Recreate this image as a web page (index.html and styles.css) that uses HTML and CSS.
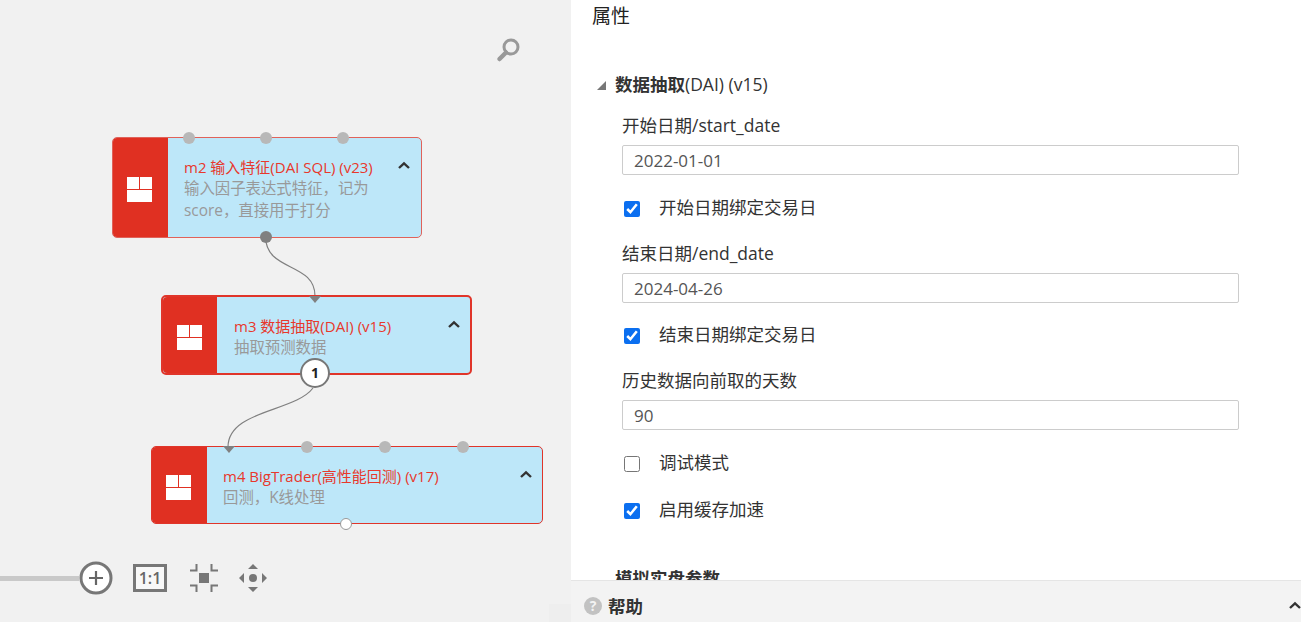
FILE: index.html
```html
<!DOCTYPE html>
<html lang="zh">
<head>
<meta charset="utf-8">
<title>属性</title>
<link rel="stylesheet" href="styles.css">
</head>
<body>
<div class="app">
  <div class="canvas">
    <svg class="search" width="26" height="26" viewBox="0 0 26 26"><circle cx="15" cy="10" r="7" fill="none" stroke="#999" stroke-width="3"/><path d="M10 15.500 3.500 22" stroke="#999" stroke-width="4.500" stroke-linecap="round"/></svg>

    <svg class="wires" width="571" height="622" viewBox="0 0 571 622">
      <path d="M265.500 237C266 272 315 262 315 296" fill="none" stroke="#808080" stroke-width="1.200"/>
      <path d="M313 388C295 412 228 410 228 447" fill="none" stroke="#808080" stroke-width="1.200"/>
    </svg>

    <div class="node node-m2">
      <div class="node-icon"><span class="grid-icon"><i></i><i></i><i class="wide"></i></span></div>
      <div class="node-body">
        <div class="node-title">m2 输入特征(DAI SQL) (v23)</div>
        <div class="node-desc">输入因子表达式特征，记为<br>score，直接用于打分</div>
      </div>
      <svg class="chev" width="12" height="8" viewBox="0 0 12 8"><path d="M1 7 6 2.300 11 7" fill="none" stroke="#333" stroke-width="2.400"/></svg>
      <b class="port top p1"></b><b class="port top p2"></b><b class="port top p3"></b>
      <b class="port bottom out"></b>
    </div>

    <div class="node node-m3">
      <div class="node-icon"><span class="grid-icon"><i></i><i></i><i class="wide"></i></span></div>
      <div class="node-body">
        <div class="node-title">m3 数据抽取(DAI) (v15)</div>
        <div class="node-desc">抽取预测数据</div>
      </div>
      <svg class="chev" width="12" height="8" viewBox="0 0 12 8"><path d="M1 7 6 2.300 11 7" fill="none" stroke="#333" stroke-width="2.400"/></svg>
      <span class="arrow-in"></span>
      <span class="badge">1</span>
    </div>

    <div class="node node-m4">
      <div class="node-icon"><span class="grid-icon"><i></i><i></i><i class="wide"></i></span></div>
      <div class="node-body">
        <div class="node-title">m4 BigTrader(高性能回测) (v17)</div>
        <div class="node-desc">回测，K线处理</div>
      </div>
      <svg class="chev" width="12" height="8" viewBox="0 0 12 8"><path d="M1 7 6 2.300 11 7" fill="none" stroke="#333" stroke-width="2.400"/></svg>
      <span class="arrow-in"></span>
      <b class="port top p1"></b><b class="port top p2"></b><b class="port top p3"></b>
      <b class="port bottom empty"></b>
    </div>

    <div class="toolbar">
      <span class="slider"></span>
      <svg width="34" height="34" viewBox="0 0 34 34"><circle cx="17" cy="17" r="15" fill="#fff" stroke="#777" stroke-width="3"/><path d="M10 17H24M17 10V24" stroke="#666" stroke-width="2.200"/></svg>
      <span class="one-one">1:1</span>
      <svg class="tool-fit" width="28" height="28" viewBox="0 0 28 28"><rect x="9" y="9" width="10" height="10" fill="#777"/><path d="M0 6.500H6.500V0M21.500 0V6.500H28M0 21.500H6.500V28M21.500 28V21.500H28" fill="none" stroke="#777" stroke-width="2"/></svg>
      <svg class="tool-move" width="28" height="28" viewBox="0 0 28 28"><circle cx="14" cy="14" r="4" fill="#777"/><path d="M14 0 19 5H9ZM14 28 9 23H19ZM0 14 5 9V19ZM28 14 23 19V9Z" fill="#777"/></svg>
    </div>
    <span class="corner"></span>
  </div>

  <div class="panel">
    <h1 class="panel-title">属性</h1>
    <div class="scroll">
      <h2 class="section"><span class="tri"></span>数据抽取<span class="section-latin">(DAI) (v15)</span></h2>
      <div class="form">
        <label class="lbl">开始日期/start_date</label>
        <input class="txt" type="text" value="2022-01-01">
        <label class="chk"><input type="checkbox" checked>开始日期绑定交易日</label>
        <label class="lbl">结束日期/end_date</label>
        <input class="txt" type="text" value="2024-04-26">
        <label class="chk chk-tight"><input type="checkbox" checked>结束日期绑定交易日</label>
        <label class="lbl">历史数据向前取的天数</label>
        <input class="txt" type="text" value="90">
        <label class="chk chk-plain"><input type="checkbox">调试模式</label>
        <label class="chk chk-plain"><input type="checkbox" checked>启用缓存加速</label>
      </div>
      <h2 class="section section-next">模拟实盘参数</h2>
    </div>
    <div class="help">
      <span class="help-q">?</span>
      <span class="help-text">帮助</span>
      <svg class="help-chev" width="12" height="8" viewBox="0 0 12 8"><path d="M1 7 6 2.300 11 7" fill="none" stroke="#333" stroke-width="2.400"/></svg>
    </div>
  </div>
</div>
</body>
</html>
```
FILE: styles.css
```css
* { box-sizing: border-box; }
html, body { margin: 0; height: 100%; overflow: hidden; }
body {
  font-family: "Open Sans", "Noto Sans CJK SC", "Noto Sans", sans-serif;
  color: #333;
  background: #fff;
}
.app { display: flex; width: 1301px; height: 622px; }

/* free canvas */
.canvas { position: relative; width: 571px; flex: none; height: 100%; background: #f1f1f1; overflow: hidden; }
.search { position: absolute; left: 496px; top: 37px; }
.wires { position: absolute; left: 0; top: 0; }
.corner { position: absolute; left: 549px; top: 604px; width: 22px; height: 18px; background: #eeeeee; }

.node {
  position: absolute;
  display: flex;
  background: #bde7f9;
  border: 1px solid #e0625a;
  border-radius: 5px;
}
.node-m2 { left: 112px; top: 137px; width: 310px; height: 101px; }
.node-m3 { left: 161px; top: 295px; width: 311px; height: 80px; border: 2px solid #e0352a; }
.node-m4 { left: 151px; top: 446px; width: 392px; height: 78px; border-color: #e0352a; }

.node-icon {
  flex: none;
  width: 55px;
  padding: 4px 2px 0 0;
  background: #e03022;
  border-radius: 4px 0 0 4px;
  display: flex;
  align-items: center;
  justify-content: center;
}
.node-m3 .node-icon { width: 54px; }
.node-m4 .node-icon { padding-top: 5px; }
.grid-icon { display: grid; grid-template-columns: 12px 12px; grid-template-rows: 12px 12px; gap: 1px; }
.grid-icon i { background: #fff; }
.grid-icon .wide { grid-column: 1 / 3; }

.node-body { padding: 18px 0 0 16px; min-width: 0; }
.node-m3 .node-body { padding-left: 17px; }
.node-title { font-size: 15px; line-height: 22px; color: #e8382c; white-space: nowrap; }
.node-desc { font-size: 15.400px; line-height: 22px; color: #999; white-space: nowrap; }

.chev { position: absolute; right: 11px; top: 23px; }
.node-m3 .chev { right: 10px; top: 23px; }
.node-m4 .chev { right: 10px; top: 23px; }

.port { position: absolute; width: 12px; height: 12px; border-radius: 50%; background: #b8b8b8; }
.port.top { top: -6px; }
.node-m2 .p1 { left: 70px; }
.node-m2 .p2 { left: 147px; }
.node-m2 .p3 { left: 224px; }
.node-m4 .p1 { left: 149px; }
.node-m4 .p2 { left: 227px; }
.node-m4 .p3 { left: 305px; }
.port.out { left: 147px; bottom: -6px; background: #808080; }
.port.empty { left: 188px; bottom: -7px; background: #fff; border: 1px solid #999; }

.arrow-in {
  position: absolute;
  width: 0; height: 0;
  border-left: 6px solid transparent;
  border-right: 6px solid transparent;
  border-top: 7px solid #808080;
}
.node-m3 .arrow-in { left: 146px; top: -1px; }
.node-m4 .arrow-in { left: 71px; top: -1px; }

.badge {
  position: absolute;
  left: 137px;
  top: 61px;
  width: 30px;
  height: 30px;
  border-radius: 50%;
  background: #fff;
  border: 2px solid #777;
  color: #222;
  font-size: 14px;
  font-weight: 700;
  line-height: 26px;
  text-align: center;
}

.toolbar { position: absolute; left: -2px; top: 561px; display: flex; align-items: center; height: 34px; }
.slider { width: 81px; height: 5px; background: #c9c9c9; }
.one-one {
  margin-left: 20px;
  width: 34px;
  height: 28px;
  border: 3px solid #777;
  background: #f8f8f8;
  color: #666;
  font-size: 16px;
  font-weight: 600;
  line-height: 22px;
  text-align: center;
}
.tool-fit { margin-left: 23px; }
.tool-move { margin-left: 21px; }

/* property panel */
.panel { flex: 1; min-width: 0; height: 100%; display: flex; flex-direction: column; background: #fff; }
.panel-title { margin: 0; flex: none; height: 32px; padding-left: 21px; font-size: 19px; font-weight: 400; line-height: 32px; color: #222; }
.scroll { flex: 1; min-height: 0; overflow: hidden; padding: 39px 62px 0 44px; }
.section { position: relative; margin: 0; font-size: 17.500px; font-weight: 700; line-height: 26px; color: #333; white-space: nowrap; }
.section-latin { font-size: 17.500px; font-weight: 500; }
.tri {
  position: absolute;
  left: -18px;
  top: 10px;
  width: 0; height: 0;
  border-left: 9px solid transparent;
  border-bottom: 9px solid #777;
}
.section-next { margin-top: 41px; }
.form { padding: 16px 0 0 7px; display: flex; flex-direction: column; }
.lbl { font-size: 17.500px; line-height: 24px; height: 26px; color: #333; }
.txt {
  width: 617px;
  height: 30px;
  margin-top: 6px;
  padding: 0 10px 0 11px;
  border: 1px solid #ccc;
  border-radius: 2px;
  font: inherit;
  font-size: 17px;
  color: #555;
  background: #fff;
}
.chk { display: flex; align-items: center; height: 26px; margin: 21px 0 19px; padding-bottom: 4px; font-size: 17.500px; line-height: 22px; color: #333; }
.chk input { width: 16px; height: 16px; margin: 4px 19px 0 2px; accent-color: #0b6ff0; flex: none; }
.chk-tight { margin-top: 20px; }
.chk-plain { margin-bottom: 0; }
.chk-plain + .chk-plain { margin-top: 21px; }

.help {
  flex: none;
  position: relative;
  height: 42px;
  display: flex;
  align-items: center;
  padding: 8px 0 0 13px;
  background: #f3f3f3;
  border-top: 1px solid #e5e5e5;
}
.help-q {
  width: 18px; height: 18px;
  border-radius: 50%;
  background: #c2c2c2;
  color: #f3f3f3;
  font-size: 14px;
  font-weight: 700;
  line-height: 18px;
  text-align: center;
}
.help-text { margin-left: 6px; font-size: 17.500px; font-weight: 700; color: #333; }
.help-chev { position: absolute; right: 0; top: 20px; }
```
